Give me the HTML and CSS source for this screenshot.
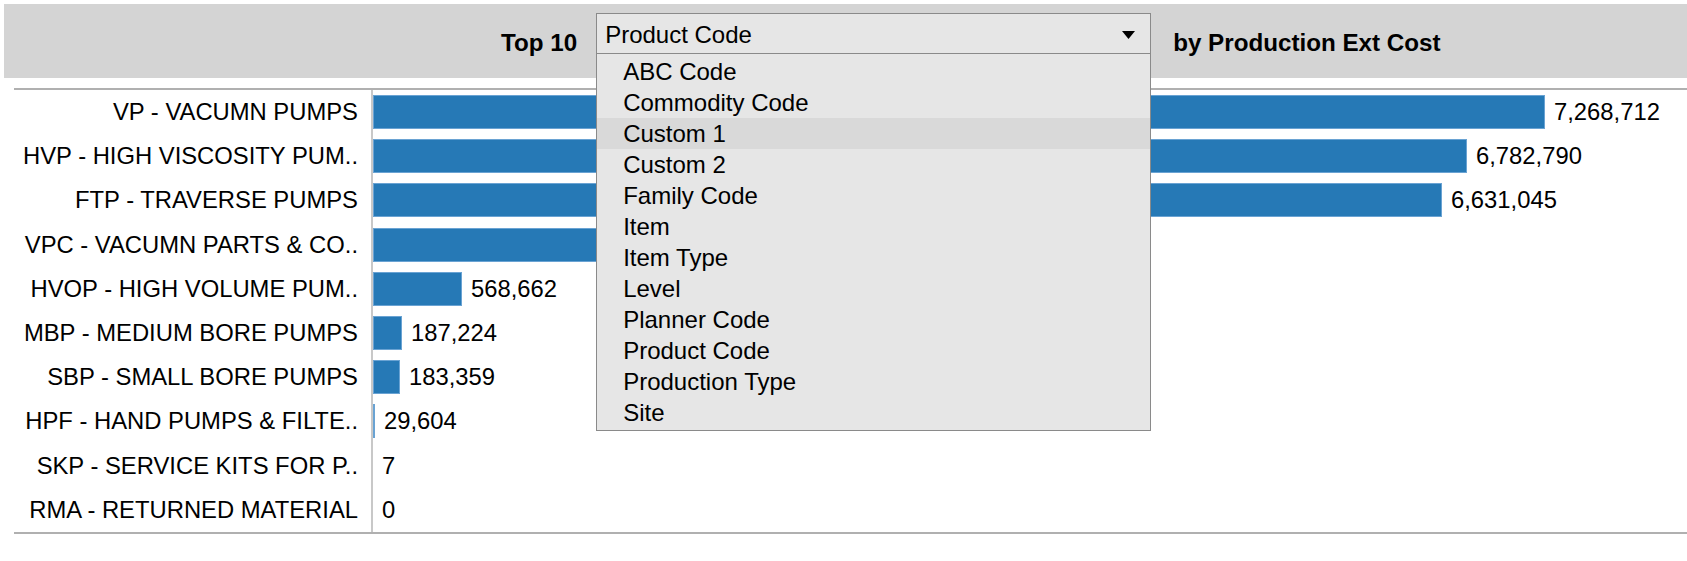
FILE: index.html
```html
<!DOCTYPE html>
<html>
<head>
<meta charset="utf-8">
<title>Top 10 by Production Ext Cost</title>
<link rel="stylesheet" href="styles.css">
</head>
<body>
<div class="header">
  <span class="title">Top 10</span>
  <div class="select">
    <div class="select-box">
      <span>Product Code</span>
      <svg class="arrow" width="13" height="8" viewBox="0 0 13 8"><polygon points="0,0 13,0 6.5,8" fill="#000"/></svg>
    </div>
    <ul class="options">
      <li>ABC Code</li>
      <li>Commodity Code</li>
      <li class="active">Custom 1</li>
      <li>Custom 2</li>
      <li>Family Code</li>
      <li>Item</li>
      <li>Item Type</li>
      <li>Level</li>
      <li>Planner Code</li>
      <li>Product Code</li>
      <li>Production Type</li>
      <li>Site</li>
    </ul>
  </div>
  <span class="title">by Production Ext Cost</span>
</div>
<div class="chart">
  <div class="row"><div class="label">VP - VACUMN PUMPS</div><div class="plot"><div class="bar" style="width:1172px"></div><span class="value">7,268,712</span></div></div>
  <div class="row"><div class="label">HVP - HIGH VISCOSITY PUM..</div><div class="plot"><div class="bar" style="width:1094px"></div><span class="value">6,782,790</span></div></div>
  <div class="row"><div class="label">FTP - TRAVERSE PUMPS</div><div class="plot"><div class="bar" style="width:1069px"></div><span class="value">6,631,045</span></div></div>
  <div class="row"><div class="label">VPC - VACUMN PARTS &amp; CO..</div><div class="plot"><div class="bar" style="width:629px"></div><span class="value">3,900,000</span></div></div>
  <div class="row"><div class="label">HVOP - HIGH VOLUME PUM..</div><div class="plot"><div class="bar" style="width:89px"></div><span class="value">568,662</span></div></div>
  <div class="row"><div class="label">MBP - MEDIUM BORE PUMPS</div><div class="plot"><div class="bar" style="width:29px"></div><span class="value">187,224</span></div></div>
  <div class="row"><div class="label">SBP - SMALL BORE PUMPS</div><div class="plot"><div class="bar" style="width:27px"></div><span class="value">183,359</span></div></div>
  <div class="row"><div class="label">HPF - HAND PUMPS &amp; FILTE..</div><div class="plot"><div class="bar" style="width:2px"></div><span class="value">29,604</span></div></div>
  <div class="row"><div class="label">SKP - SERVICE KITS FOR P..</div><div class="plot"><div class="bar bar-empty" style="width:0px"></div><span class="value">7</span></div></div>
  <div class="row"><div class="label">RMA - RETURNED MATERIAL</div><div class="plot"><div class="bar bar-empty" style="width:0px"></div><span class="value">0</span></div></div>
</div>
</body>
</html>
```
FILE: styles.css
```css
html, body {
  margin: 0;
  padding: 0;
  background: #fff;
}

body {
  font-family: "Liberation Sans", Arial, sans-serif;
  font-size: 24px;
  color: #000;
}

.header {
  margin: 4px 0 0 4px;
  height: 74px;
  box-sizing: border-box;
  padding: 4px 0 0 497px;
  background: #d4d4d4;
  display: flex;
  align-items: center;
}

.title {
  font-weight: bold;
  font-size: 24.2px;
  line-height: 28px;
  white-space: nowrap;
}

.select {
  position: relative;
  align-self: flex-start;
  margin: 5px 22px 0 19px;
  width: 555px;
  flex: none;
}

.select-box {
  height: 41px;
  box-sizing: border-box;
  border: 1px solid #8a8a8a;
  background: #e6e6e6;
  display: flex;
  align-items: center;
  justify-content: space-between;
  padding: 2px 15px 0 8px;
}

.arrow {
  display: block;
  margin-top: 1px;
}

.options {
  position: absolute;
  top: 100%;
  left: 0;
  right: 0;
  z-index: 2;
  margin: 0;
  padding: 2px 0;
  list-style: none;
  background: #e6e6e6;
  border: 1px solid #8a8a8a;
  border-top: none;
}

.options li {
  height: 31px;
  line-height: 31px;
  padding-left: 26px;
  white-space: nowrap;
}

.options li.active {
  background: #d9d9d9;
}

.chart {
  margin: 10px 0 0 14px;
  border-top: 2px solid #b0b0b0;
  border-bottom: 2px solid #b0b0b0;
  font-size: 23.8px;
}

.row {
  display: flex;
  height: 44.2px;
  align-items: center;
}

.label {
  flex: none;
  width: 344px;
  padding-right: 13px;
  text-align: right;
  white-space: nowrap;
}

.plot {
  flex: 1;
  height: 100%;
  display: flex;
  align-items: center;
  border-left: 2px solid #c8c8c8;
}

.bar {
  flex: none;
  height: 34px;
  box-sizing: border-box;
  background: #2679b6;
  border: 1px solid #6aa3d3;
}

.bar-empty {
  border: none;
}

.value {
  margin-left: 9px;
  white-space: nowrap;
}
```
